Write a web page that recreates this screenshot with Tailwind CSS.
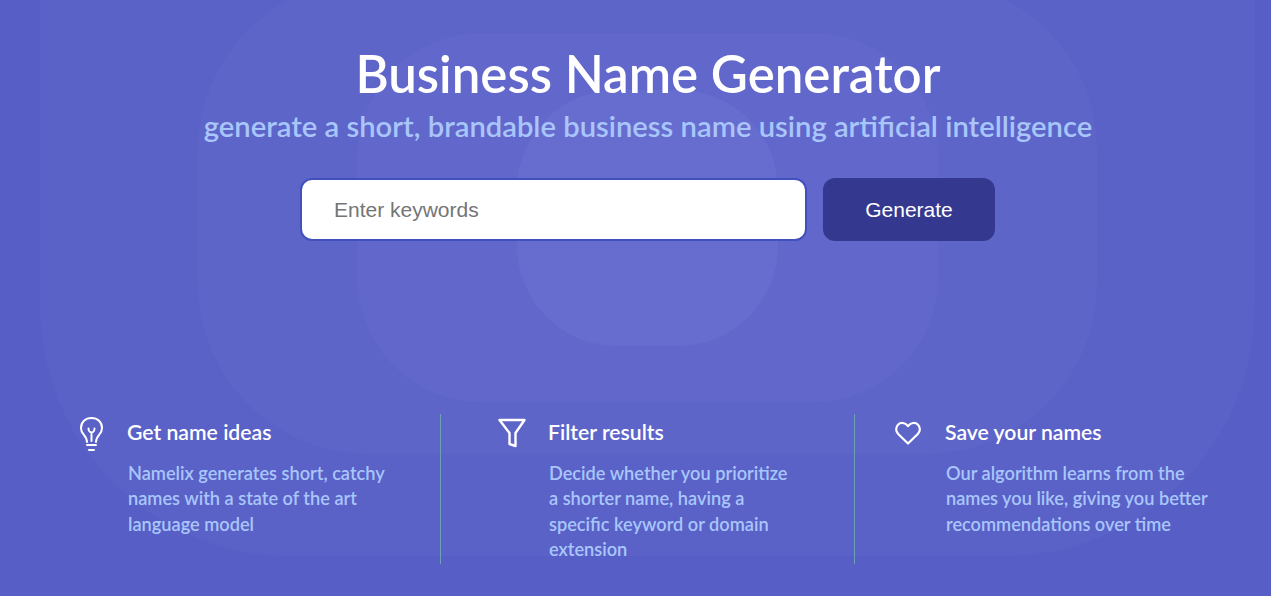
<!DOCTYPE html>
<html lang="en">
<head>
    <meta charset="UTF-8">
    <title>Business Name Generator</title>
    <script src="https://cdn.jsdelivr.net/npm/@tailwindcss/browser@4"></script>
</head>
<body class="relative h-[596px] overflow-hidden bg-[#575ec5] font-['Lato',sans-serif]">
    <!-- background rounded squares -->
    <div class="absolute left-[40px] top-[-340px] w-[1215px] h-[896px] rounded-[250px] bg-[#a8b8ff]/[0.04]"></div>
    <div class="absolute left-[198px] top-[-20px] w-[899px] h-[474px] rounded-[170px] bg-[#a8b8ff]/[0.05]"></div>
    <div class="absolute left-[357px] top-[33px] w-[581px] h-[369px] rounded-[125px] bg-[#a8b8ff]/[0.05]"></div>
    <div class="absolute left-[517px] top-[90px] w-[261px] h-[256px] rounded-[100px] bg-[#a8b8ff]/[0.08]"></div>

    <main class="relative pl-[25px]">
        <!-- hero -->
        <section class="flex flex-col items-center pt-[42px]">
            <h1 class="text-[51px] leading-[64px] font-semibold text-white">Business Name Generator</h1>
            <p class="text-[29.200px] leading-[39px] font-semibold text-[#a9c6fb]">generate a short, brandable business name using artificial intelligence</p>
            <form class="mt-[33px] flex gap-4">
                <input type="text" placeholder="Enter keywords" class="-ml-px w-[507px] h-[63px] pl-[32px] rounded-xl border-2 border-[#4150ba] bg-white font-['Liberation_Sans',sans-serif] text-[21px] text-[#333] placeholder:text-[#757575] outline-none">
                <button type="button" class="w-[172px] h-[63px] rounded-xl bg-[#35388f] font-['Liberation_Sans',sans-serif] text-[21px] text-white">Generate</button>
            </form>
        </section>

        <!-- features -->
        <section class="mt-[173px] ml-[53px] grid grid-cols-[363px_414px_1fr] h-[150px]">
            <div class="border-r border-[#6d9fb8]">
                <div class="flex items-center h-[38px]">
                    <svg class="w-[26px] h-[36px]" viewBox="0 0 26 36" fill="none" stroke="white" stroke-width="2" stroke-linecap="round" stroke-linejoin="round">
                        <path d="M9 27c0-3.500-1.300-5-3.600-7.800C3.900 17.400 3 15.500 3 13 3 7 7.400 3 13.500 3S24 7 24 13c0 2.500-.9 4.400-2.400 6.200C19.300 22 18 23.500 18 27"/>
                        <path d="M13.500 26V17.500M10.500 13.500c0 2 1.200 4 3 4s3-2 3-4"/>
                        <path d="M9 30h9M11 35h5"/>
                    </svg>
                    <h2 class="ml-[23px] text-[21.200px] font-semibold text-white">Get name ideas</h2>
                </div>
                <p class="mt-[9px] ml-[50px] text-[18.200px] leading-[25.300px] font-semibold text-[#a9c6fb]">Namelix generates short, catchy<br>names with a state of the art<br>language model</p>
            </div>
            <div class="border-r border-[#6d9fb8] pl-[57px]">
                <div class="flex items-center h-[38px]">
                    <svg class="w-[28px] h-[30px]" viewBox="0 0 28 30" fill="none" stroke="white" stroke-width="2.400" stroke-linejoin="round">
                        <path d="M1.500 2h25L17.500 15v13l-6-2V15z"/>
                    </svg>
                    <h2 class="ml-[22px] text-[21.200px] font-semibold text-white">Filter results</h2>
                </div>
                <p class="mt-[9px] ml-[51px] text-[18.200px] leading-[25.300px] font-semibold text-[#a9c6fb]">Decide whether you prioritize<br>a shorter name, having a<br>specific keyword or domain<br>extension</p>
            </div>
            <div class="pl-[40px]">
                <div class="flex items-center h-[38px]">
                    <svg class="w-[26px] h-[24px]" viewBox="0 0 26 24" fill="none" stroke="white" stroke-width="2.200" stroke-linejoin="round">
                        <path d="M13 22.500 3.200 13C.500 10.300.500 6.200 3 3.700 5.600 1.100 10 1.300 13 5.200c3-3.900 7.400-4.100 10-1.500 2.500 2.500 2.500 6.600-.2 9.300z"/>
                    </svg>
                    <h2 class="ml-[24px] text-[21.200px] font-semibold text-white">Save your names</h2>
                </div>
                <p class="mt-[9px] ml-[51px] text-[18.200px] leading-[25.300px] font-semibold text-[#a9c6fb]">Our algorithm learns from the<br>names you like, giving you better<br>recommendations over time</p>
            </div>
        </section>
    </main>
</body>
</html>
